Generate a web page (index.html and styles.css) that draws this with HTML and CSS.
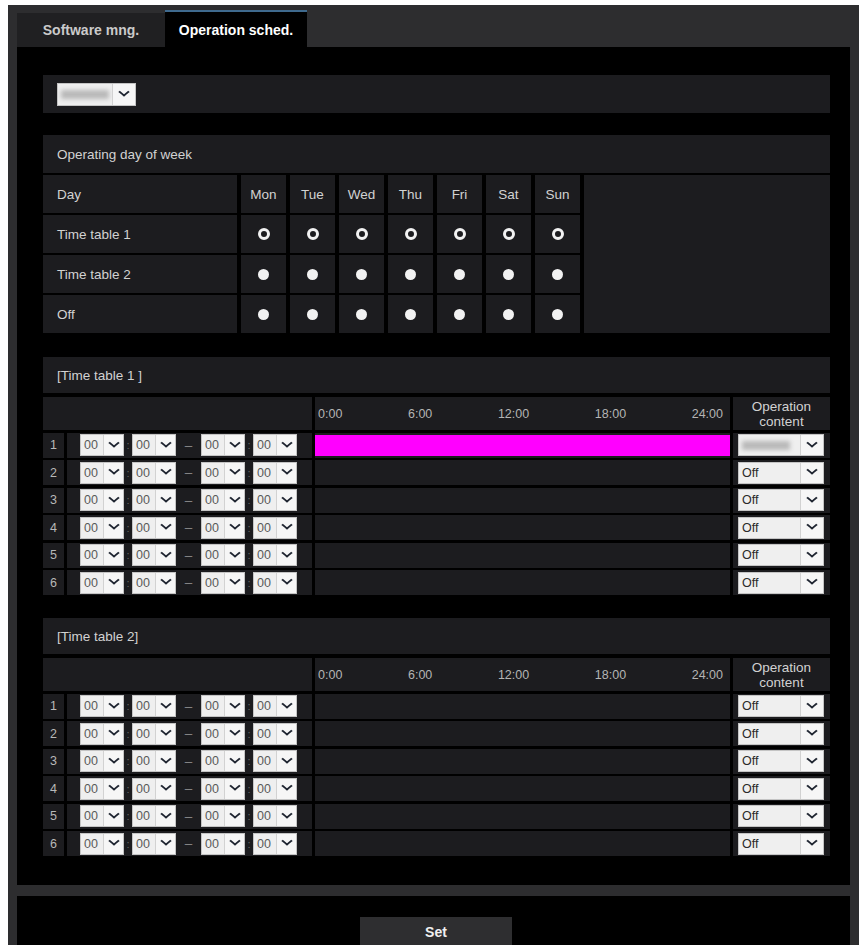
FILE: index.html
```html
<!DOCTYPE html>
<html lang="en">

<head>
    <meta charset="UTF-8">
    <meta name="viewport" content="width=device-width, initial-scale=1.0">
    <title>Operation schedule</title>
    <link rel="stylesheet" href="styles.css">
</head>

<body>
    <div class="frame">
        <div class="tabs">
            <div class="tab">Software mng.</div>
            <div class="tab active">Operation sched.</div>
        </div>

        <div class="content">
            <div class="panel top-select">
                <span class="sel big"><span class="val"><span class="blur"></span></span><i class="arr"></i></span>
            </div>

            <!-- day of week -->
            <div class="days">
                <div class="cell head">Operating day of week</div>
                <div class="cell label">Day</div>
                <div class="cell c">Mon</div>
                <div class="cell c">Tue</div>
                <div class="cell c">Wed</div>
                <div class="cell c">Thu</div>
                <div class="cell c">Fri</div>
                <div class="cell c">Sat</div>
                <div class="cell c">Sun</div>
                <div class="cell spare"></div>

                <div class="cell label">Time table 1</div>
                <div class="cell c"><i class="radio on"></i></div>
                <div class="cell c"><i class="radio on"></i></div>
                <div class="cell c"><i class="radio on"></i></div>
                <div class="cell c"><i class="radio on"></i></div>
                <div class="cell c"><i class="radio on"></i></div>
                <div class="cell c"><i class="radio on"></i></div>
                <div class="cell c"><i class="radio on"></i></div>

                <div class="cell label">Time table 2</div>
                <div class="cell c"><i class="radio"></i></div>
                <div class="cell c"><i class="radio"></i></div>
                <div class="cell c"><i class="radio"></i></div>
                <div class="cell c"><i class="radio"></i></div>
                <div class="cell c"><i class="radio"></i></div>
                <div class="cell c"><i class="radio"></i></div>
                <div class="cell c"><i class="radio"></i></div>

                <div class="cell label">Off</div>
                <div class="cell c"><i class="radio"></i></div>
                <div class="cell c"><i class="radio"></i></div>
                <div class="cell c"><i class="radio"></i></div>
                <div class="cell c"><i class="radio"></i></div>
                <div class="cell c"><i class="radio"></i></div>
                <div class="cell c"><i class="radio"></i></div>
                <div class="cell c"><i class="radio"></i></div>
            </div>

            <!-- time table 1 -->
            <div class="timetable">
                <div class="panel tt-head">[Time table 1 ]</div>
                <div class="tt-grid">
                    <div class="cell wide"></div>
                    <div class="cell hours"><span>0:00</span><span>6:00</span><span>12:00</span><span>18:00</span><span>24:00</span></div>
                    <div class="cell ophead">Operation<br>content</div>

                    <div class="cell num">1</div>
                    <div class="cell times">
                        <span class="sel"><span class="val">00</span><i class="arr"></i></span><span class="colon">:</span><span class="sel"><span class="val">00</span><i class="arr"></i></span><span class="dash">–</span><span class="sel"><span class="val">00</span><i class="arr"></i></span><span class="colon">:</span><span class="sel"><span class="val">00</span><i class="arr"></i></span>
                    </div>
                    <div class="cell line"><div class="bar"></div></div>
                    <div class="cell op"><span class="sel wide-sel"><span class="val"><span class="blur"></span></span><i class="arr"></i></span></div>

                    <div class="cell num">2</div>
                    <div class="cell times">
                        <span class="sel"><span class="val">00</span><i class="arr"></i></span><span class="colon">:</span><span class="sel"><span class="val">00</span><i class="arr"></i></span><span class="dash">–</span><span class="sel"><span class="val">00</span><i class="arr"></i></span><span class="colon">:</span><span class="sel"><span class="val">00</span><i class="arr"></i></span>
                    </div>
                    <div class="cell line"></div>
                    <div class="cell op"><span class="sel wide-sel"><span class="val">Off</span><i class="arr"></i></span></div>

                    <div class="cell num">3</div>
                    <div class="cell times">
                        <span class="sel"><span class="val">00</span><i class="arr"></i></span><span class="colon">:</span><span class="sel"><span class="val">00</span><i class="arr"></i></span><span class="dash">–</span><span class="sel"><span class="val">00</span><i class="arr"></i></span><span class="colon">:</span><span class="sel"><span class="val">00</span><i class="arr"></i></span>
                    </div>
                    <div class="cell line"></div>
                    <div class="cell op"><span class="sel wide-sel"><span class="val">Off</span><i class="arr"></i></span></div>

                    <div class="cell num">4</div>
                    <div class="cell times">
                        <span class="sel"><span class="val">00</span><i class="arr"></i></span><span class="colon">:</span><span class="sel"><span class="val">00</span><i class="arr"></i></span><span class="dash">–</span><span class="sel"><span class="val">00</span><i class="arr"></i></span><span class="colon">:</span><span class="sel"><span class="val">00</span><i class="arr"></i></span>
                    </div>
                    <div class="cell line"></div>
                    <div class="cell op"><span class="sel wide-sel"><span class="val">Off</span><i class="arr"></i></span></div>

                    <div class="cell num">5</div>
                    <div class="cell times">
                        <span class="sel"><span class="val">00</span><i class="arr"></i></span><span class="colon">:</span><span class="sel"><span class="val">00</span><i class="arr"></i></span><span class="dash">–</span><span class="sel"><span class="val">00</span><i class="arr"></i></span><span class="colon">:</span><span class="sel"><span class="val">00</span><i class="arr"></i></span>
                    </div>
                    <div class="cell line"></div>
                    <div class="cell op"><span class="sel wide-sel"><span class="val">Off</span><i class="arr"></i></span></div>

                    <div class="cell num">6</div>
                    <div class="cell times">
                        <span class="sel"><span class="val">00</span><i class="arr"></i></span><span class="colon">:</span><span class="sel"><span class="val">00</span><i class="arr"></i></span><span class="dash">–</span><span class="sel"><span class="val">00</span><i class="arr"></i></span><span class="colon">:</span><span class="sel"><span class="val">00</span><i class="arr"></i></span>
                    </div>
                    <div class="cell line"></div>
                    <div class="cell op"><span class="sel wide-sel"><span class="val">Off</span><i class="arr"></i></span></div>
                </div>
            </div>

            <!-- time table 2 -->
            <div class="timetable">
                <div class="panel tt-head">[Time table 2]</div>
                <div class="tt-grid">
                    <div class="cell wide"></div>
                    <div class="cell hours"><span>0:00</span><span>6:00</span><span>12:00</span><span>18:00</span><span>24:00</span></div>
                    <div class="cell ophead">Operation<br>content</div>

                    <div class="cell num">1</div>
                    <div class="cell times">
                        <span class="sel"><span class="val">00</span><i class="arr"></i></span><span class="colon">:</span><span class="sel"><span class="val">00</span><i class="arr"></i></span><span class="dash">–</span><span class="sel"><span class="val">00</span><i class="arr"></i></span><span class="colon">:</span><span class="sel"><span class="val">00</span><i class="arr"></i></span>
                    </div>
                    <div class="cell line"></div>
                    <div class="cell op"><span class="sel wide-sel"><span class="val">Off</span><i class="arr"></i></span></div>

                    <div class="cell num">2</div>
                    <div class="cell times">
                        <span class="sel"><span class="val">00</span><i class="arr"></i></span><span class="colon">:</span><span class="sel"><span class="val">00</span><i class="arr"></i></span><span class="dash">–</span><span class="sel"><span class="val">00</span><i class="arr"></i></span><span class="colon">:</span><span class="sel"><span class="val">00</span><i class="arr"></i></span>
                    </div>
                    <div class="cell line"></div>
                    <div class="cell op"><span class="sel wide-sel"><span class="val">Off</span><i class="arr"></i></span></div>

                    <div class="cell num">3</div>
                    <div class="cell times">
                        <span class="sel"><span class="val">00</span><i class="arr"></i></span><span class="colon">:</span><span class="sel"><span class="val">00</span><i class="arr"></i></span><span class="dash">–</span><span class="sel"><span class="val">00</span><i class="arr"></i></span><span class="colon">:</span><span class="sel"><span class="val">00</span><i class="arr"></i></span>
                    </div>
                    <div class="cell line"></div>
                    <div class="cell op"><span class="sel wide-sel"><span class="val">Off</span><i class="arr"></i></span></div>

                    <div class="cell num">4</div>
                    <div class="cell times">
                        <span class="sel"><span class="val">00</span><i class="arr"></i></span><span class="colon">:</span><span class="sel"><span class="val">00</span><i class="arr"></i></span><span class="dash">–</span><span class="sel"><span class="val">00</span><i class="arr"></i></span><span class="colon">:</span><span class="sel"><span class="val">00</span><i class="arr"></i></span>
                    </div>
                    <div class="cell line"></div>
                    <div class="cell op"><span class="sel wide-sel"><span class="val">Off</span><i class="arr"></i></span></div>

                    <div class="cell num">5</div>
                    <div class="cell times">
                        <span class="sel"><span class="val">00</span><i class="arr"></i></span><span class="colon">:</span><span class="sel"><span class="val">00</span><i class="arr"></i></span><span class="dash">–</span><span class="sel"><span class="val">00</span><i class="arr"></i></span><span class="colon">:</span><span class="sel"><span class="val">00</span><i class="arr"></i></span>
                    </div>
                    <div class="cell line"></div>
                    <div class="cell op"><span class="sel wide-sel"><span class="val">Off</span><i class="arr"></i></span></div>

                    <div class="cell num">6</div>
                    <div class="cell times">
                        <span class="sel"><span class="val">00</span><i class="arr"></i></span><span class="colon">:</span><span class="sel"><span class="val">00</span><i class="arr"></i></span><span class="dash">–</span><span class="sel"><span class="val">00</span><i class="arr"></i></span><span class="colon">:</span><span class="sel"><span class="val">00</span><i class="arr"></i></span>
                    </div>
                    <div class="cell line"></div>
                    <div class="cell op"><span class="sel wide-sel"><span class="val">Off</span><i class="arr"></i></span></div>
                </div>
            </div>
        </div>

        <div class="footer">
            <button class="set-btn">Set</button>
        </div>
    </div>
</body>

</html>
```

FILE: styles.css
```css
html,
body {
    overflow: hidden;
}

body {
    margin: 0;
    background-color: #ffffff;
    font-family: "Liberation Sans", Arial, sans-serif;
    font-size: 13.5px;
    color: #d2d2d2;
}

.frame {
    margin: 5px 0 0 8px;
    padding: 0 9px;
    background-color: #2d2d2f;
}

/* tabs */
.tabs {
    display: flex;
    align-items: flex-end;
    height: 42px;
}

.tab {
    width: 148px;
    height: 34px;
    display: flex;
    align-items: center;
    justify-content: center;
    background-color: #202022;
    color: #cacaca;
    font-size: 14px;
    font-weight: bold;
}

.tab.active {
    width: 142px;
    height: 35px;
    border-top: 2px solid #3f6a8e;
    background-color: #000000;
    color: #ffffff;
}

/* main area */
.content {
    background-color: #000000;
    padding: 28px 20px 29px 26px;
}

.panel,
.cell {
    background-color: #1c1c1f;
}

.top-select {
    height: 38px;
    display: flex;
    align-items: center;
    padding-left: 14px;
    margin-bottom: 22px;
}

/* fake select boxes */
.sel {
    display: inline-flex;
    height: 22px;
    width: 44px;
    box-sizing: border-box;
    border: 1px solid #c4c4c4;
    background-color: #efefef;
    color: #5a5a5a;
    font-size: 12.5px;
}

.sel .val {
    flex: 1;
    display: flex;
    align-items: center;
    padding-left: 3px;
    overflow: hidden;
}

.sel .arr {
    width: 19px;
    display: flex;
    align-items: center;
    justify-content: center;
    border-left: 1px solid #d2d2d2;
    background-color: #f6f6f6;
}

.sel .arr::after {
    content: "";
    width: 6px;
    height: 6px;
    margin-top: -5px;
    border-right: 2px solid #1e2430;
    border-bottom: 2px solid #1e2430;
    transform: scaleY(0.8) rotate(45deg);
}

.sel.big {
    width: 79px;
    height: 23px;
}

.sel.big .arr {
    width: 22px;
}

.sel.wide-sel {
    width: 86px;
    color: #2a2a2a;
}

.sel.wide-sel .arr {
    width: 22px;
}

.blur {
    display: inline-block;
    width: 48px;
    height: 9px;
    background-color: #b9b9b9;
    filter: blur(2px);
}

/* day of week */
.days {
    display: grid;
    grid-template-columns: 194px repeat(7, 45px) 1fr;
    grid-template-rows: repeat(5, 38px);
    gap: 2px 4px;
    margin-bottom: 24px;
}

.days .head {
    grid-column: 1 / -1;
}

.days .cell {
    display: flex;
    align-items: center;
}

.days .head,
.days .label {
    padding-left: 14px;
}

.days .c {
    justify-content: center;
}

.days .spare {
    grid-column: 9;
    grid-row: 2 / span 4;
}

.radio {
    width: 11px;
    height: 11px;
    border-radius: 50%;
    background-color: #f2f2f2;
}

.radio.on {
    width: 6px;
    height: 6px;
    background-color: #1c1c1f;
    border: 3px solid #f2f2f2;
}

/* time tables */
.timetable {
    margin-bottom: 23px;
}

.timetable:last-child {
    margin-bottom: 0;
}

.tt-head {
    height: 36px;
    display: flex;
    align-items: center;
    padding-left: 14px;
    margin-bottom: 4px;
}

.tt-grid {
    display: grid;
    grid-template-columns: 21px 245px 415px 97px;
    grid-template-rows: 33px repeat(6, 25px);
    gap: 2.5px 3px;
}

.tt-grid .wide {
    grid-column: 1 / span 2;
}

.hours {
    display: flex;
    justify-content: space-between;
    align-items: center;
    padding: 0 7px 0 3px;
    font-size: 12.5px;
    color: #b4b4b4;
}

.ophead {
    display: flex;
    align-items: center;
    justify-content: center;
    text-align: center;
    line-height: 15px;
    font-size: 13.5px;
}

.num {
    display: flex;
    align-items: center;
    justify-content: center;
    font-size: 12.5px;
    color: #b8b8b8;
}

.times {
    display: flex;
    align-items: center;
    padding-left: 13px;
}

.colon {
    width: 8px;
    text-align: center;
    color: #666666;
    font-size: 11px;
}

.dash {
    width: 25px;
    text-align: center;
    color: #8a8a8a;
}

.line {
    padding-top: 2px;
    box-sizing: border-box;
}

.bar {
    height: 21px;
    background-color: #ff00ff;
}

.op {
    display: flex;
    align-items: center;
    padding-left: 5px;
}

/* footer */
.footer {
    margin-top: 11px;
    height: 49px;
    padding-top: 21px;
    box-sizing: border-box;
    background-color: #000000;
    text-align: center;
    overflow: hidden;
}

.set-btn {
    width: 152px;
    height: 30px;
    margin-left: 5px;
    border: none;
    background-color: #2e2e30;
    color: #f0f0f0;
    font-family: "Liberation Sans", Arial, sans-serif;
    font-size: 14px;
    font-weight: bold;
}
```
